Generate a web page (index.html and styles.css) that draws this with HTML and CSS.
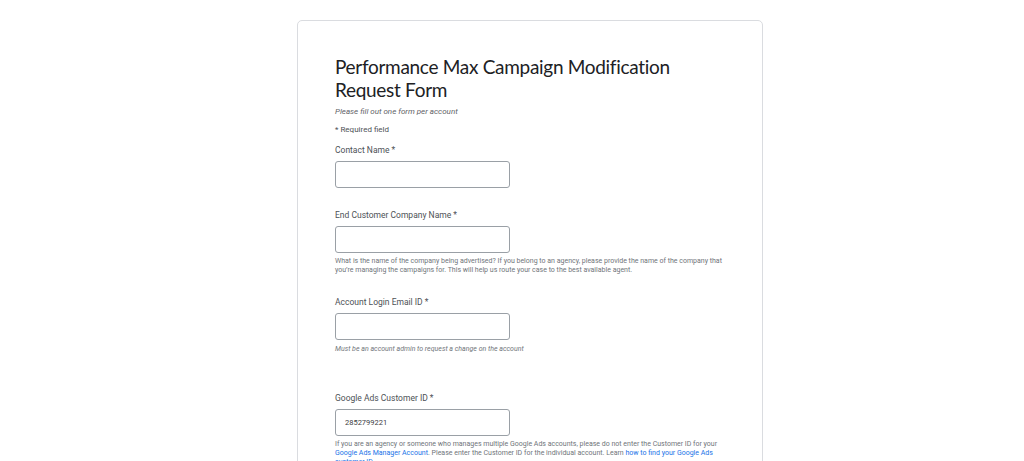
FILE: index.html
```html
<!DOCTYPE html>
<html lang="en">
<head>
<meta charset="utf-8">
<title>Performance Max Campaign Modification Request Form</title>
<link rel="stylesheet" href="styles.css">
</head>
<body>
<main class="page">
  <form class="card">
    <h1 class="title">Performance Max Campaign Modification Request Form</h1>
    <p class="intro">Please fill out one form per account</p>
    <p class="required-note">* Required field</p>

    <div class="field field-first">
      <label class="label" for="contact">Contact Name *</label>
      <input class="input" id="contact" type="text">
    </div>

    <div class="field field-second">
      <label class="label" for="company">End Customer Company Name *</label>
      <input class="input" id="company" type="text">
      <p class="help">What is the name of the company being advertised? If you belong to an agency, please provide the name of the company that you’re managing the campaigns for. This will help us route your case to the best available agent.</p>
    </div>

    <div class="field field-third">
      <label class="label" for="email">Account Login Email ID *</label>
      <input class="input" id="email" type="text">
      <p class="help help-italic">Must be an account admin to request a change on the account</p>
    </div>

    <div class="field field-fourth">
      <label class="label" for="cid">Google Ads Customer ID *</label>
      <input class="input" id="cid" type="text" value="2852799221">
      <p class="help">If you are an agency or someone who manages multiple Google Ads accounts, please do not enter the Customer ID for your <a class="link" href="#">Google Ads Manager Account</a>. Please enter the Customer ID for the individual account. Learn <a class="link" href="#">how to find your Google Ads customer ID</a>.</p>
    </div>
  </form>
</main>
</body>
</html>
```

FILE: styles.css
```css
* { box-sizing: border-box; }

html, body {
  margin: 0;
  padding: 0;
  background: #ffffff;
}

body {
  font-family: Roboto, "Liberation Sans", Arial, sans-serif;
  color: #3c4043;
}

.page {
  padding: 20px 0 40px 297px;
}

.card {
  width: 466px;
  border: 1px solid #dadce0;
  border-radius: 5px;
  padding: 35px 38px 60px 37px;
  background: #fff;
}

.title {
  margin: 0;
  font-family: Lato, Roboto, sans-serif;
  font-weight: 400;
  font-size: 19px;
  line-height: 22.5px;
  letter-spacing: -0.3px;
  color: #202124;
}

.intro {
  margin: 5px 0 0;
  font-size: 8px;
  line-height: 12px;
  font-style: italic;
  color: #5f6368;
}

.required-note {
  margin: 6px 0 0;
  font-size: 8px;
  line-height: 12px;
  color: #4d5156;
}

.field {
  display: flex;
  flex-direction: column;
  align-items: flex-start;
}

.field-first { margin-top: 8px; }
.field-second { margin-top: 21px; }
.field-third { margin-top: 21px; }
.field-fourth { margin-top: 38px; }

.label {
  font-size: 8.5px;
  line-height: 12px;
  color: #4d5156;
  margin-bottom: 5px;
}

.input {
  width: 175px;
  height: 27px;
  border: 1px solid #9aa0a6;
  border-radius: 3px;
  padding: 0 9px;
  font-family: Roboto, "Liberation Sans", Arial, sans-serif;
  font-size: 7.5px;
  color: #3c4043;
  background: #fff;
  outline: none;
}

.help {
  margin: 4px 0 0;
  font-size: 7px;
  line-height: 9px;
  color: #70757a;
}

.help-italic {
  font-style: italic;
  margin-top: 5px;
}

.link {
  color: #1a73e8;
  text-decoration: none;
}
```
